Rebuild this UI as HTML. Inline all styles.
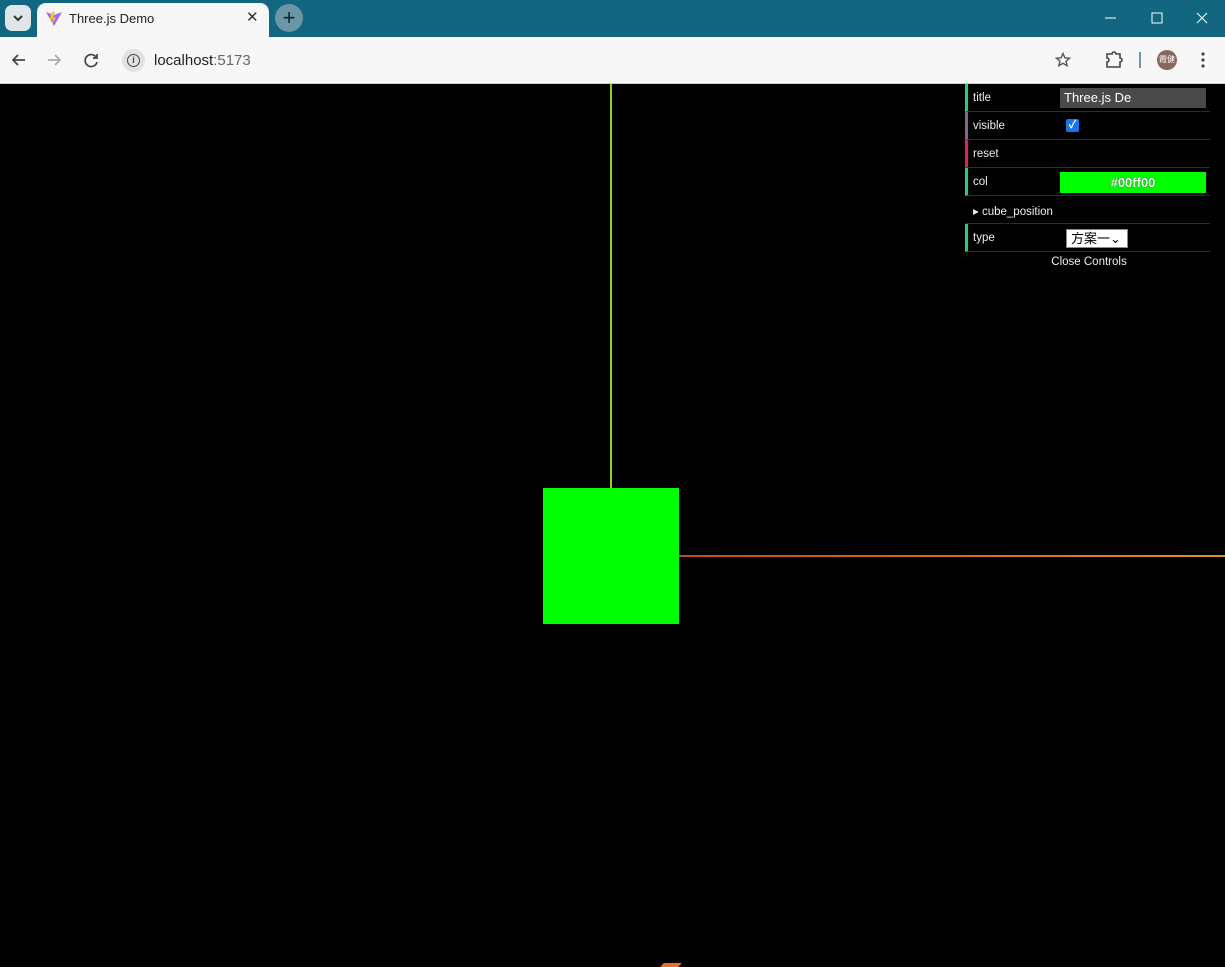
<!DOCTYPE html>
<html><head><meta charset="utf-8"><style>
*{margin:0;padding:0;box-sizing:border-box}
body{width:1225px;height:966px;overflow:hidden;background:#000;font-family:"Liberation Sans","Noto Sans CJK SC",sans-serif;position:relative}
.tabs{position:absolute;left:0;top:0;width:1225px;height:37px;background:#136680}
.tab{position:absolute;left:37px;top:3px;width:232px;height:34px;background:#f7f7f7;border-radius:9px 9px 0 0}
.bar{position:absolute;left:0;top:37px;width:1225px;height:47px;background:#f7f7f7;border-bottom:1px solid #ccc}
.gui{position:absolute;left:965px;top:84px;width:245px;font-size:11.5px;color:#eee}
.row{height:28px;border-bottom:1px solid #2c2c2c;border-left:3px solid #1ed36f;position:relative;background:#000}
.row span.l{position:absolute;left:5px;top:8px}
</style></head><body>
<div class="tabs">
 <div style="position:absolute;left:5px;top:5px;width:26px;height:26px;background:#dfe6ea;border-radius:7px"><svg width="26" height="26"><path d="M9 11l4 4 4-4" stroke="#333" stroke-width="2" fill="none"/></svg></div>
 <div class="tab">
  <svg style="position:absolute;left:8px;top:7px" width="18" height="18"><path d="M1 2L9 16 17 2 9 5z" fill="#9a6bff"/><path d="M6 3l4-2-2 7 3-1-4 8 1-6-3 1z" fill="#ffc517"/></svg>
  <span style="position:absolute;left:32px;top:8px;font-size:13px;color:#222">Three.js Demo</span>
  <span style="position:absolute;left:209px;top:5px;font-size:15px;color:#333">✕</span>
 </div>
 <div style="position:absolute;left:275px;top:4px;width:28px;height:28px;border-radius:50%;background:#6b96a6;color:#123;font-size:22px;line-height:27px;text-align:center">+</div>
 <svg style="position:absolute;left:1100px;top:10px" width="120" height="16"><path d="M5 8h11" stroke="#fff"/><rect x="52" y="3" width="10" height="10" fill="none" stroke="#fff"/><path d="M97 3l10 10M107 3l-10 10" stroke="#fff"/></svg>
</div>
<div class="bar">
 <svg style="position:absolute;left:10px;top:14px" width="90" height="18"><path d="M15 9H3M8 4L3 9l5 5" stroke="#444" stroke-width="1.7" fill="none"/><path d="M38 9h12M45 4l5 5-5 5" stroke="#aaa" stroke-width="1.7" fill="none"/><path d="M86 6a6 6 0 1 0 1 5M87 3v4h-4" stroke="#444" stroke-width="1.7" fill="none"/></svg>
 <div style="position:absolute;left:122px;top:12px;width:23px;height:23px;border-radius:50%;background:#e2e2e2"></div>
 <div style="position:absolute;left:127px;top:17px;width:13px;height:13px;border:1.5px solid #444;border-radius:50%;font-size:9px;text-align:center;line-height:10px;font-weight:bold;color:#444">i</div>
 <span style="position:absolute;left:154px;top:15px;font-size:15px;color:#222">localhost<span style="color:#666">:5173</span></span>
 <svg style="position:absolute;left:1055px;top:15px" width="16" height="16"><path d="M8 1.5l1.9 4.3 4.6.4-3.5 3 1.1 4.5L8 11.3 3.9 13.7 5 9.2l-3.5-3 4.6-.4z" fill="none" stroke="#555" stroke-width="1.4"/></svg>
 <svg style="position:absolute;left:1104px;top:13px" width="20" height="20"><path d="M3 4h5a2 2 0 0 1 4 0h4v4a2 2 0 0 1 0 4v5H3v-5a2 2 0 0 0 0-4z" fill="none" stroke="#444" stroke-width="1.6"/></svg>
 <div style="position:absolute;left:1139px;top:15px;width:2px;height:16px;background:#6b9ab0"></div>
 <div style="position:absolute;left:1157px;top:13px;width:20px;height:20px;border-radius:50%;background:#8a675c;color:#fff;font-size:8px;line-height:20px;text-align:center">霞健</div>
 <svg style="position:absolute;left:1199px;top:14px" width="8" height="18"><circle cx="4" cy="3" r="1.6" fill="#444"/><circle cx="4" cy="9" r="1.6" fill="#444"/><circle cx="4" cy="15" r="1.6" fill="#444"/></svg>
</div>
<div style="position:absolute;left:610px;top:84px;width:2px;height:404px;background:#8fcf10"></div>
<div style="position:absolute;left:679px;top:555px;width:546px;height:2px;background:linear-gradient(90deg,#c24a1c,#d8941c)"></div>
<div style="position:absolute;left:543px;top:488px;width:136px;height:136px;background:#00ff00"></div>
<div style="position:absolute;left:662px;top:963px;width:18px;height:4px;background:#f06a2a;transform:skewX(-40deg)"></div>
<div class="gui">
 <div class="row"><span class="l">title</span><div style="position:absolute;left:92px;top:4px;width:146px;height:20px;background:#4a4a4a;color:#fff;font-size:13px;padding:2px 4px">Three.js De</div></div>
 <div class="row" style="border-left-color:#806787"><span class="l">visible</span><div style="position:absolute;left:98px;top:7px;width:13px;height:13px;background:#1a73e8;border-radius:2px;color:#fff;font-size:11px;line-height:13px;text-align:center;font-weight:bold">✓</div></div>
 <div class="row" style="border-left-color:#e61d5f"><span class="l">reset</span></div>
 <div class="row"><span class="l">col</span><div style="position:absolute;left:92px;top:4px;width:146px;height:21px;background:#00ff00;color:#fff;font-weight:bold;font-size:13px;text-align:center;line-height:21px;text-shadow:0 0 1px #000">#00ff00</div></div>
 <div class="row" style="border-left:0"><span class="l" style="left:8px">▸ cube_position</span></div>
 <div class="row"><span class="l">type</span><div style="position:absolute;left:98px;top:5px;width:62px;height:19px;background:#fff;border:1px solid #888;color:#000;font-size:13px;padding-left:4px;line-height:17px">方案一⌄</div></div>
 <div style="height:20px;text-align:center;line-height:20px;padding-left:3px">Close Controls</div>
</div>
</body></html>
